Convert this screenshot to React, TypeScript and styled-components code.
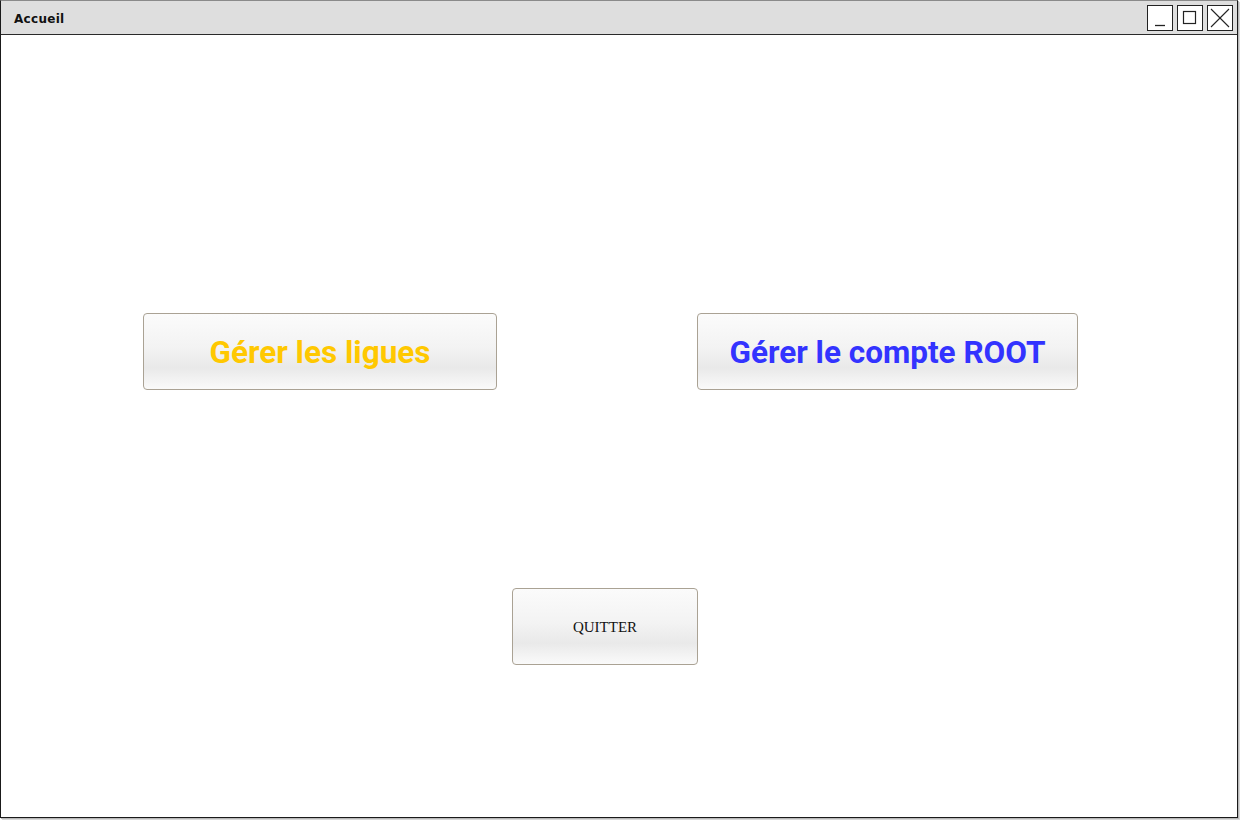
import React from "react";
import styled, { createGlobalStyle } from "styled-components";

const Global = createGlobalStyle`
  html, body { margin: 0; padding: 0; background: #ffffff; }
  body { width: 1240px; height: 820px; overflow: hidden; }
`;

const Window = styled.div`
  box-sizing: border-box;
  width: 1238px;
  height: 818px;
  border: 1px solid #1a1a1a;
  border-top-color: #8a8a8a;
  box-shadow: 1px 1px 0 #b8b8b8, 2px 2px 0 #d8d8d8;
  background: #ffffff;
  display: flex;
  flex-direction: column;
`;

const TitleBar = styled.div`
  box-sizing: border-box;
  height: 34px;
  flex: 0 0 34px;
  background: #dedede;
  border-bottom: 1px solid #2a2a2a;
  display: flex;
  align-items: center;
  justify-content: space-between;
  padding: 0 4px 1px 13px;
`;

const Title = styled.span`
  font-family: "Comic Sans MS", "DejaVu Sans", sans-serif;
  font-weight: bold;
  font-size: 12px;
  letter-spacing: 0.3px;
  color: #111;
  margin-top: 3px;
`;

const Controls = styled.div`
  display: flex;
  gap: 4px;
  margin-top: 1px;
`;

const CtrlBox = styled.div`
  box-sizing: border-box;
  width: 26px;
  height: 26px;
  border: 1px solid #222;
  background: #fff;
  display: flex;
  align-items: center;
  justify-content: center;
`;

const Content = styled.div`
  flex: 1;
  display: flex;
  flex-direction: column;
  padding-top: 278px;
`;

const Row = styled.div`
  display: flex;
  padding-left: 142px;
  gap: 200px;
`;

const Button = styled.div<{ $w: number; $color: string; $serif?: boolean }>`
  box-sizing: border-box;
  width: ${(p) => p.$w}px;
  height: 77px;
  border: 1px solid #aaa294;
  border-radius: 4px;
  background: linear-gradient(
    to bottom,
    #fbfbfb 0%,
    #f3f3f3 45%,
    #e9e9e9 72%,
    #f4f4f4 90%,
    #fafafa 100%
  );
  display: flex;
  align-items: center;
  justify-content: center;
  padding-top: 2px;
  color: ${(p) => p.$color};
  font-family: ${(p) =>
    p.$serif ? '"Liberation Serif", "Times New Roman", serif' : 'Roboto, "Liberation Sans", sans-serif'};
  font-weight: ${(p) => (p.$serif ? 400 : 700)};
  font-size: ${(p) => (p.$serif ? "15px" : "31.5px")};
`;

const QuitRow = styled.div`
  display: flex;
  padding-left: 511px;
  margin-top: 198px;
`;

export default function App() {
  return (
    <>
      <Global />
      <Window>
        <TitleBar>
          <Title>Accueil</Title>
          <Controls>
            <CtrlBox>
              <svg width="24" height="24" viewBox="0 0 24 24">
                <line x1="7" y1="19.5" x2="17" y2="19.5" stroke="#222" strokeWidth="1.3" />
              </svg>
            </CtrlBox>
            <CtrlBox>
              <svg width="24" height="24" viewBox="0 0 24 24">
                <rect x="5.5" y="5.5" width="12" height="12" fill="none" stroke="#222" strokeWidth="1.2" />
              </svg>
            </CtrlBox>
            <CtrlBox>
              <svg width="24" height="24" viewBox="0 0 24 24">
                <line x1="3" y1="3" x2="21" y2="21" stroke="#222" strokeWidth="1.1" />
                <line x1="21" y1="3" x2="3" y2="21" stroke="#222" strokeWidth="1.1" />
              </svg>
            </CtrlBox>
          </Controls>
        </TitleBar>
        <Content>
          <Row>
            <Button $w={354} $color="#ffc800">Gérer les ligues</Button>
            <Button $w={381} $color="#3333ff">Gérer le compte ROOT</Button>
          </Row>
          <QuitRow>
            <Button $w={186} $color="#111" $serif>QUITTER</Button>
          </QuitRow>
        </Content>
      </Window>
    </>
  );
}
